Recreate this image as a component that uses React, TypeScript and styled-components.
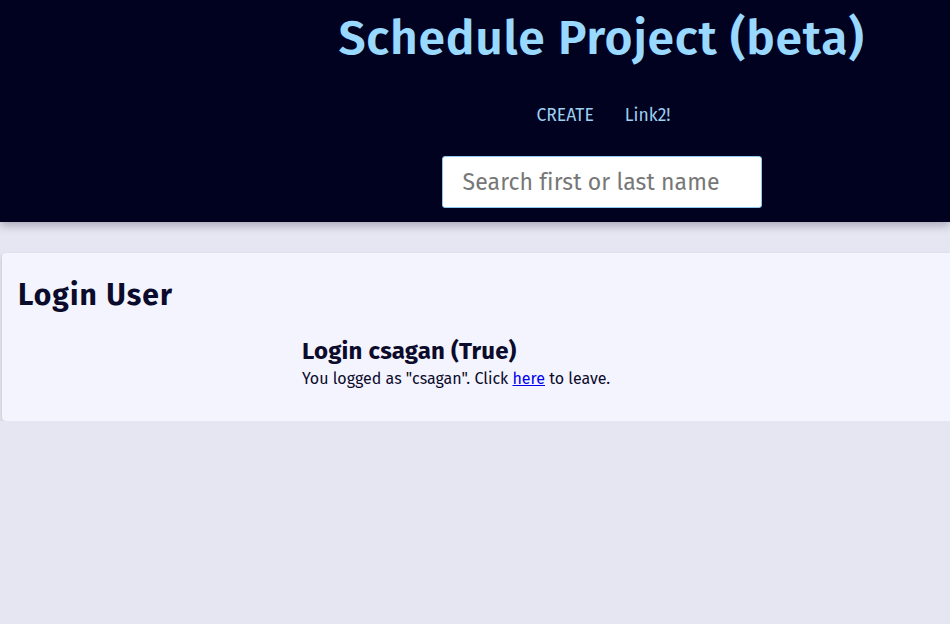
import React from 'react'
import styled, { createGlobalStyle } from 'styled-components'

const GlobalStyle = createGlobalStyle`
  html, body {
    margin: 0;
    padding: 0;
    background: #e6e6f2;
    font-family: "Fira Sans", "Noto Sans", sans-serif;
    color: #0b0b2b;
  }
`

const Header = styled.header`
  display: grid;
  grid-template-columns: 253px 1fr;
  height: 222px;
  background: #000220;
  box-shadow: 0 4px 8px rgba(0, 0, 30, 0.25);
`

const HeaderMain = styled.div`
  display: flex;
  flex-direction: column;
  align-items: center;
`

const Title = styled.h1`
  margin: 6px 0 0;
  font-size: 48px;
  font-weight: 600;
  letter-spacing: 0.75px;
  line-height: 64px;
  color: #99d8ff;
`

const Nav = styled.nav`
  display: flex;
  gap: 31px;
  margin-top: 35px;
  padding-left: 4px;
`

const NavLink = styled.a`
  font-size: 17.5px;
  line-height: 22px;
  color: #9ccff0;
  text-decoration: none;
`

const SearchInput = styled.input`
  box-sizing: border-box;
  width: 320px;
  height: 52px;
  margin-top: 29px;
  padding: 0 20px;
  border: 1px solid #8cc8f0;
  border-radius: 3px;
  background: #fff;
  font-family: inherit;
  font-size: 23px;
  letter-spacing: 0.1px;
  color: #333;
  outline: none;

  &::placeholder {
    color: #777;
  }
`

const Content = styled.main`
  padding: 31px 0 0 2px;
`

const Card = styled.section`
  background: #f4f4fe;
  border-radius: 4px 0 0 4px;
  box-shadow: 0 2px 4px rgba(0, 0, 40, 0.18);
  padding: 22px 16px 32px;
`

const CardTitle = styled.h2`
  margin: 0;
  font-size: 30px;
  font-weight: 700;
  letter-spacing: 1.1px;
  line-height: 40px;
`

const CardBody = styled.div`
  padding-left: 284px;
  margin-top: 21px;
`

const SubTitle = styled.h3`
  margin: 0;
  font-size: 24px;
  font-weight: 700;
  letter-spacing: 0.2px;
  line-height: 30px;
`

const Text = styled.p`
  margin: 3px 0 0;
  font-size: 16px;
  line-height: 20px;

  a {
    color: #0000ee;
  }
`

export default function App() {
  return (
    <>
      <GlobalStyle />
      <Header>
        <div />
        <HeaderMain>
          <Title>Schedule Project (beta)</Title>
          <Nav>
            <NavLink href="#">CREATE</NavLink>
            <NavLink href="#">Link2!</NavLink>
          </Nav>
          <SearchInput placeholder="Search first or last name" />
        </HeaderMain>
      </Header>
      <Content>
        <Card>
          <CardTitle>Login User</CardTitle>
          <CardBody>
            <SubTitle>Login csagan (True)</SubTitle>
            <Text>
              You logged as "csagan". Click <a href="#">here</a> to leave.
            </Text>
          </CardBody>
        </Card>
      </Content>
    </>
  )
}
